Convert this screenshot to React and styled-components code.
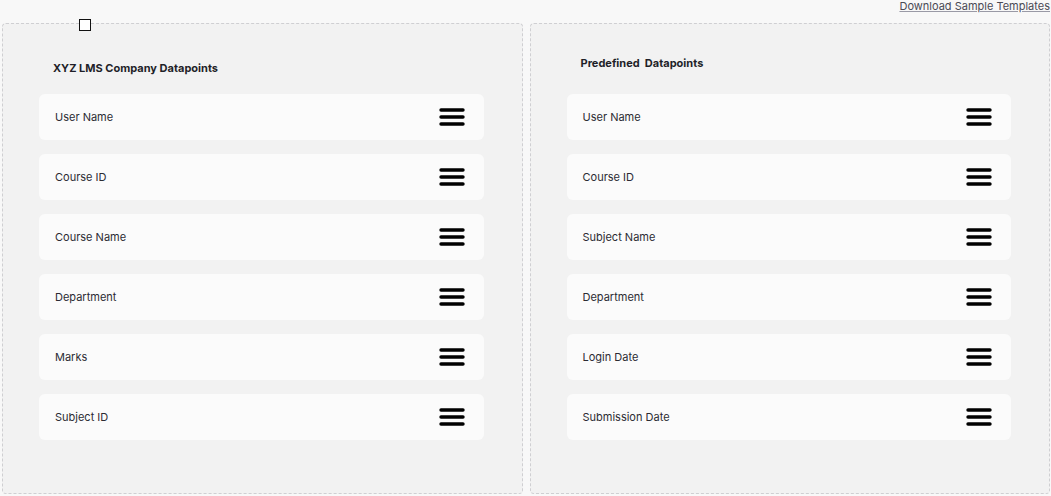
import React from "react";
import styled, { createGlobalStyle } from "styled-components";

const Global = createGlobalStyle`
  * { box-sizing: border-box; }
  body {
    margin: 0;
    background: #f8f8f8;
    font-family: Inter, "Noto Sans", sans-serif;
    color: #23232b;
  }
`;

const Page = styled.div`
  position: relative;
  width: 1051px;
  height: 496px;
  padding: 0 1px 2px 2px;
  display: flex;
  flex-direction: column;
  overflow: hidden;
`;

const TopBar = styled.div`
  height: 23px;
  display: flex;
  justify-content: flex-end;
  align-items: flex-start;
`;

const DownloadLink = styled.a`
  font-size: 11px;
  line-height: 12px;
  color: #4a4a55;
  text-decoration: underline;
  text-decoration-color: #9a9aa6;
  text-underline-offset: 1px;
  cursor: pointer;
`;

const Check = styled.span`
  position: absolute;
  left: 79px;
  top: 19px;
  width: 12px;
  height: 12px;
  border: 1.5px solid #111;
  background: #fff;
`;

const Columns = styled.div`
  flex: 1;
  display: grid;
  grid-template-columns: 1fr 1fr;
  gap: 7px;
`;

const Panel = styled.section`
  background: #f2f2f2;
  border: 1px dashed #cfcfd2;
  border-radius: 4px;
  padding: ${(p) => p.$top}px 38px 0 36px;
`;

const Title = styled.h3`
  margin: 0 0 ${(p) => p.$gap}px 14px;
  font-size: 11px;
  line-height: 14px;
  font-weight: 700;
  color: #1f1f28;
`;

const List = styled.div`
  display: flex;
  flex-direction: column;
  gap: 14px;
`;

const Row = styled.div`
  height: 46px;
  background: #fbfbfb;
  border-radius: 6px;
  padding: 0 19px 0 16px;
  display: flex;
  align-items: center;
  justify-content: space-between;
  font-size: 11px;
  color: #2b2b33;
`;

const Handle = () => (
  <svg width="26" height="20" viewBox="0 0 26 20">
    <g stroke="#000" strokeWidth="3.4" strokeLinecap="round">
      <line x1="2" y1="3" x2="24" y2="3" />
      <line x1="2" y1="10" x2="24" y2="10" />
      <line x1="2" y1="17" x2="24" y2="17" />
    </g>
  </svg>
);

const leftItems = ["User Name", "Course ID", "Course Name", "Department", "Marks", "Subject ID"];
const rightItems = ["User Name", "Course ID", "Subject Name", "Department", "Login Date", "Submission Date"];

const DatapointPanel = ({ title, items, top, gap }) => (
  <Panel $top={top}>
    <Title $gap={gap}>{title}</Title>
    <List>
      {items.map((item, i) => (
        <Row key={i}>
          <span>{item}</span>
          <Handle />
        </Row>
      ))}
    </List>
  </Panel>
);

export default function App() {
  return (
    <Page>
      <Global />
      <TopBar>
        <DownloadLink>Download Sample Templates</DownloadLink>
      </TopBar>
      <Check />
      <Columns>
        <DatapointPanel title="XYZ LMS Company Datapoints" items={leftItems} top={37} gap={19} />
        <DatapointPanel title={"Predefined\u00a0 Datapoints"} items={rightItems} top={32} gap={24} />
      </Columns>
    </Page>
  );
}
